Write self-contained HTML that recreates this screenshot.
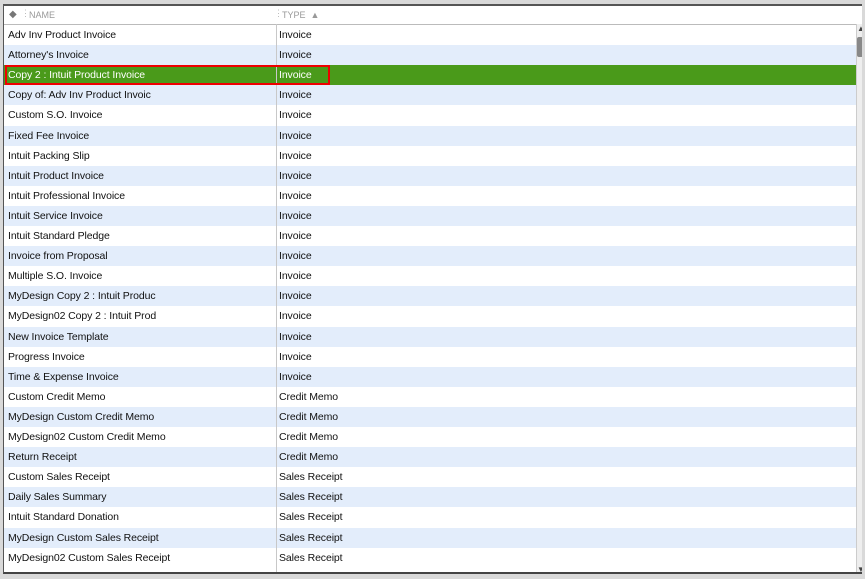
<!DOCTYPE html><html><head><style>
body{margin:0;width:865px;height:579px;background:#d9d9d9;position:relative;overflow:hidden;font-family:"Liberation Sans",Arial,sans-serif;font-size:10.5px;color:#111}
#f{position:absolute;left:3px;top:4px;width:859px;height:570px;background:#fff;border-top:2px solid #555;border-left:1px solid #555;border-bottom:2px solid #444;box-sizing:border-box;overflow:hidden}
#h{position:absolute;left:0;top:0;width:852px;height:18px;border-bottom:1px solid #bbb;color:#999;font-size:9px}
.r{position:absolute;left:0;width:852px;height:20px;line-height:20px;letter-spacing:-0.1px}
.r span{position:absolute}
.a{background:#e3edfb}
.s{background:#4a9a1a;color:#fff}
#div{position:absolute;left:272px;top:18px;width:1px;height:560px;background:#c8c8c8}
#sb{position:absolute;left:852px;top:18px;width:7px;height:552px;background:#eee;border-left:1px solid #ccc}
</style></head><body>
<div id="f">
<div id="h"><span style="position:absolute;left:5px;top:3px;color:#777;font-size:10px">◆</span><span style="position:absolute;left:17px;top:2px;color:#bbb">⋮</span><span style="position:absolute;left:25px;top:4px">NAME</span><span style="position:absolute;left:270px;top:2px;color:#bbb">⋮</span><span style="position:absolute;left:278px;top:4px">TYPE &nbsp;▲</span></div>
<div id="rows"></div>
<div id="div"></div>
<div id="sb"><div style="position:absolute;left:0;top:0;font-size:8px;color:#444">▲</div><div style="position:absolute;left:0;top:13px;width:6px;height:20px;background:#888;border-radius:2px"></div><div style="position:absolute;left:0;bottom:2px;font-size:8px;color:#444">▼</div></div>
<div style="position:absolute;left:1px;top:59px;width:325px;height:20px;border:2px solid #e00;box-sizing:border-box"></div>
</div>
<script>
var d=[["Adv Inv Product Invoice","Invoice"],["Attorney's Invoice","Invoice"],["Copy 2 : Intuit Product Invoice","Invoice"],["Copy of: Adv Inv Product Invoic","Invoice"],["Custom S.O. Invoice","Invoice"],["Fixed Fee Invoice","Invoice"],["Intuit Packing Slip","Invoice"],["Intuit Product Invoice","Invoice"],["Intuit Professional Invoice","Invoice"],["Intuit Service Invoice","Invoice"],["Intuit Standard Pledge","Invoice"],["Invoice from Proposal","Invoice"],["Multiple S.O. Invoice","Invoice"],["MyDesign Copy 2 : Intuit Produc","Invoice"],["MyDesign02 Copy 2 : Intuit Prod","Invoice"],["New Invoice Template","Invoice"],["Progress Invoice","Invoice"],["Time & Expense Invoice","Invoice"],["Custom Credit Memo","Credit Memo"],["MyDesign Custom Credit Memo","Credit Memo"],["MyDesign02 Custom Credit Memo","Credit Memo"],["Return Receipt","Credit Memo"],["Custom Sales Receipt","Sales Receipt"],["Daily Sales Summary","Sales Receipt"],["Intuit Standard Donation","Sales Receipt"],["MyDesign Custom Sales Receipt","Sales Receipt"],["MyDesign02 Custom Sales Receipt","Sales Receipt"]];
var h="";d.forEach(function(r,i){var c=i==2?"s":(i%2?"a":"");h+='<div class="r '+c+'" style="top:'+(19+i*20.1)+'px"><span style="left:4px">'+r[0].replace("&","&amp;")+'</span><span style="left:275px">'+r[1]+'</span></div>'});document.getElementById("rows").innerHTML=h;
</script>
</body></html>
